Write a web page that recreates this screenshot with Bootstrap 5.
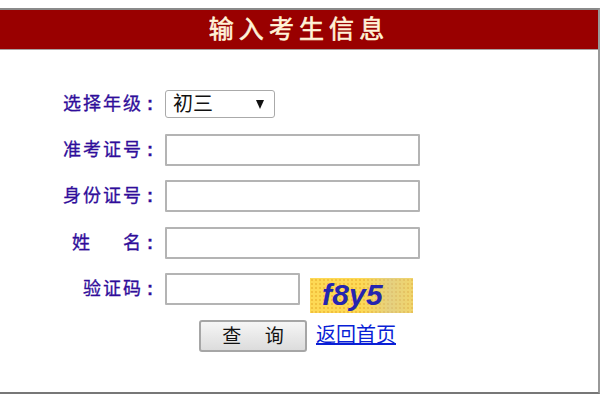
<!DOCTYPE html>
<html lang="zh">
<head>
<meta charset="utf-8">
<title>输入考生信息</title>
<link href="https://cdn.jsdelivr.net/npm/bootstrap@5.3.0/dist/css/bootstrap.min.css" rel="stylesheet">
<style>
html,body{background:#fff;margin:0;overflow:hidden}
body{font-family:"Liberation Sans","Noto Sans CJK SC",sans-serif;height:400px;padding-top:8px}
.panel{height:386px;border-top:2px solid #8a8a8a;border-right:2px solid #999;border-bottom:2px solid #777}
.head-bar{height:40px;background:#990000;color:#fff3d8;font-size:25px;font-weight:400;-webkit-text-stroke:.6px #fff3d8;letter-spacing:5.1px;line-height:39px;text-align:center;border-bottom:1px solid #a9a0a0}
.form-area{padding-top:40px}
.frow{height:46.5px;display:flex;align-items:flex-start}
.frow.first{height:43.5px}
.lab{width:158px;flex:none;color:#2f0d9a;font-size:18px;-webkit-text-stroke:.3px #2f0d9a;line-height:29px;text-align:right;letter-spacing:2px;padding-right:5px;white-space:nowrap}
.frow:not(.first) .lab{line-height:32px}
.colon{font-weight:700;margin-left:4px;letter-spacing:0}
.name-gap{margin-right:31px}
.sel-box{margin-left:7px;width:110px;height:28px;border:1px solid #aaa;border-radius:3px;display:flex;align-items:center;justify-content:space-between;padding:0 10px 0 7px;font-size:20px;color:#111;background:#fff}
.sel-arrow{width:0;height:0;border-left:4.5px solid transparent;border-right:4.5px solid transparent;border-top:9px solid #111}
.txt{margin-left:7px;width:255px;height:32px;border:2px solid #b4b4b4;background:#fff;border-radius:1px;padding:0 4px;box-shadow:none;outline:0}
.txt.short{width:135px}
.captcha{margin-left:10px;width:103px;height:35px;margin-top:4.5px;background-color:#fdd955;background-image:linear-gradient(90deg,transparent 50%,rgba(205,200,170,.5) 78%,rgba(205,200,170,.25) 100%),radial-gradient(circle,rgba(240,190,60,.9) 1px,transparent 1.3px);background-size:100% 100%,4px 4px;font:italic 700 30px/34px "Liberation Sans",sans-serif;color:#2525b0;padding-left:12px;letter-spacing:.2px}
.act{display:flex;align-items:flex-start;padding-left:199px;padding-top:.5px}
.qbtn{width:108px;height:32px;padding:0;border:2px solid #a6a6a6;border-radius:3px;background:linear-gradient(#f6f6f6,#dcdcdc);color:#111;font-size:19px;line-height:27px;word-spacing:18px}
.back{margin-left:9px;color:#0a1fd6;font-size:20px;line-height:31px;text-decoration:underline}
</style>
</head>
<body>
<div class="panel">
  <div class="head-bar">输入考生信息</div>
  <form class="form-area">
    <div class="frow first"><div class="lab">选择年级<span class="colon">:</span></div><div class="sel-box"><span>初三</span><span class="sel-arrow"></span></div></div>
    <div class="frow"><div class="lab">准考证号<span class="colon">:</span></div><input class="txt" type="text" aria-label="准考证号"></div>
    <div class="frow"><div class="lab">身份证号<span class="colon">:</span></div><input class="txt" type="text" aria-label="身份证号"></div>
    <div class="frow"><div class="lab"><span class="name-gap">姓</span>名<span class="colon">:</span></div><input class="txt" type="text" aria-label="姓名"></div>
    <div class="frow"><div class="lab">验证码<span class="colon">:</span></div><input class="txt short" type="text" aria-label="验证码"><div class="captcha">f8y5</div></div>
    <div class="act"><button class="qbtn" type="button">查 询</button><a class="back" href="#">返回首页</a></div>
  </form>
</div>
<script src="https://cdn.jsdelivr.net/npm/bootstrap@5.3.0/dist/js/bootstrap.bundle.min.js"></script>
</body>
</html>
